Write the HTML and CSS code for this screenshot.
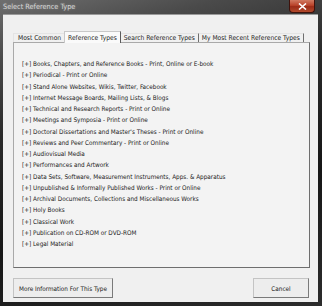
FILE: index.html
```html
<!DOCTYPE html>
<html lang="en">
<head>
    <meta charset="UTF-8">
    <meta name="viewport" content="width=device-width, initial-scale=1.0">
    <title>Select Reference Type</title>
    <link rel="stylesheet" href="styles.css">
</head>
<body>
    <div class="window">
        <div class="titlebar">
            <span class="title">Select Reference Type</span>
            <button class="close" aria-label="Close">
                <svg width="9" height="7" viewBox="0 0 9 7"><path d="M1 0.5 L8 6.5 M8 0.5 L1 6.5" stroke="#fff" stroke-width="1.6"/></svg>
            </button>
        </div>

        <div class="client">
            <div class="tabs">
                <div class="tab first">Most Common</div>
                <div class="tab active">Reference Types</div>
                <div class="tab">Search Reference Types</div>
                <div class="tab">My Most Recent Reference Types</div>
            </div>

            <div class="panel">
                <ul class="types">
                    <li>[+] Books, Chapters, and Reference Books - Print, Online or E-book</li>
                    <li>[+] Periodical - Print or Online</li>
                    <li>[+] Stand Alone Websites, Wikis, Twitter, Facebook</li>
                    <li>[+] Internet Message Boards, Mailing Lists, &amp; Blogs</li>
                    <li>[+] Technical and Research Reports - Print or Online</li>
                    <li>[+] Meetings and Symposia - Print or Online</li>
                    <li>[+] Doctoral Dissertations and Master's Theses - Print or Online</li>
                    <li>[+] Reviews and Peer Commentary - Print or Online</li>
                    <li>[+] Audiovisual Media</li>
                    <li>[+] Performances and Artwork</li>
                    <li>[+] Data Sets, Software, Measurement Instruments, Apps. &amp; Apparatus</li>
                    <li>[+] Unpublished &amp; Informally Published Works - Print or Online</li>
                    <li>[+] Archival Documents, Collections and Miscellaneous Works</li>
                    <li>[+] Holy Books</li>
                    <li>[+] Classical Work</li>
                    <li>[+] Publication on CD-ROM or DVD-ROM</li>
                    <li>[+] Legal Material</li>
                </ul>
            </div>

            <div class="actions">
                <button class="btn btn-info">More Information For This Type</button>
                <button class="btn btn-cancel">Cancel</button>
            </div>
        </div>
    </div>
</body>
</html>
```

FILE: styles.css
```css
body {
    margin: 0;
    background: #1c1c1c;
    font-family: 'DejaVu Sans Condensed', 'DejaVu Sans', sans-serif;
    font-size: 6.35px;
    color: #1a1a1a;
}

.window {
    width: 322px;
    height: 306px;
    box-sizing: border-box;
    padding: 0 4px 4px 3px;
    display: flex;
    flex-direction: column;
    background: linear-gradient(165deg, #6e6e6e 0%, #4a4a4a 15%, #2a2a2a 35%, #161616 65%, #2c2c2c 100%);
}

.titlebar {
    height: 15px;
    display: flex;
    justify-content: space-between;
    align-items: flex-start;
}

.title {
    margin-top: 2px;
    font-size: 7.3px;
    color: #d8d8d8;
    text-shadow: 0 0 3px rgba(255,255,255,0.3);
}

.close {
    width: 26px;
    height: 13px;
    margin-right: 3px;
    padding: 0;
    border: 1px solid #3e120c;
    border-top: none;
    border-radius: 0 0 4px 4px;
    background: linear-gradient(#d07a62 0%, #b9432a 45%, #9c2c18 55%, #b24a2c 100%);
    display: flex;
    align-items: center;
    justify-content: center;
}

.client {
    flex: 1;
    display: flex;
    flex-direction: column;
    background: #f0f0f0;
    padding: 16px 8px 4px 10px;
    border-top: 1px solid #9a9a9a;
}

.tabs {
    height: 11px;
    display: flex;
    align-items: flex-end;
    position: relative;
    z-index: 1;
    font-size: 6.65px;
}

.tab {
    height: 9px;
    box-sizing: border-box;
    display: flex;
    align-items: center;
    padding: 0 3px;
    border-top: 1px solid #e4e4e4;
    border-right: 1px solid #6f6f6f;
}

.tab.first {
    padding-left: 4px;
    padding-right: 3px;
    border-right: none;
    border-left: 1px solid #e4e4e4;
}

.tab.active {
    height: 12px;
    margin-bottom: -1px;
    padding: 0 3px;
    background: #fafafa;
    border: 1px solid #c8c8c8;
    border-right-color: #5a5a5a;
    border-bottom: none;
}

.panel {
    height: 226px;
    box-sizing: border-box;
    border: 1px solid #a9a9a9;
    border-right-color: #6e6e6e;
    border-bottom-color: #6e6e6e;
    background: #f3f3f3;
    padding: 15px 8px 0 8px;
}

.types {
    list-style: none;
    margin: 0;
    padding: 0;
}

.types li {
    height: 11.25px;
    line-height: 11.25px;
    white-space: nowrap;
}

.actions {
    margin-top: 10px;
    display: flex;
    justify-content: space-between;
    padding-right: 1px;
}

.btn {
    height: 20px;
    padding: 0;
    font-family: inherit;
    font-size: inherit;
    color: #1a1a1a;
    background: #ededed;
    border: 1px solid #c4c4c4;
    border-right-color: #7a7a7a;
    border-bottom-color: #7a7a7a;
}

.btn-info {
    width: 100px;
}

.btn-cancel {
    width: 56px;
}
```
